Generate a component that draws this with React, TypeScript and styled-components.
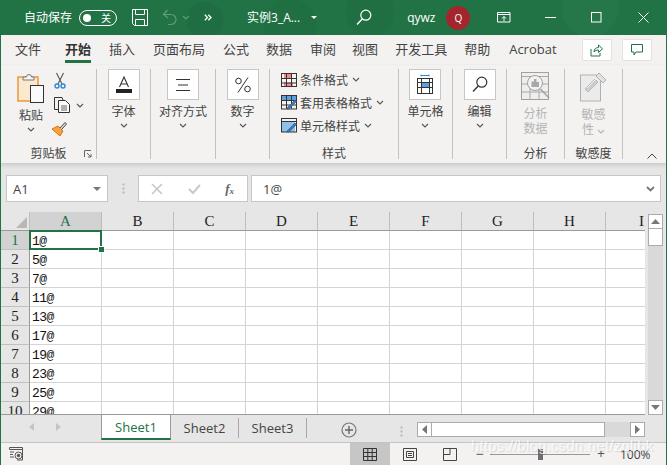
import React from 'react';
import styled, {createGlobalStyle} from 'styled-components';

const GREEN = '#217346';
const UI_FONT = '"Open Sans", "Noto Sans CJK SC", sans-serif';
const SHEET_FONT = '"Liberation Mono", "DejaVu Sans Mono", monospace';

const COLUMNS = ['A', 'B', 'C', 'D', 'E', 'F', 'G', 'H', 'I'];
const VALUES = ['1@', '5@', '7@', '11@', '13@', '17@', '19@', '23@', '25@', '29@'];
const TABS = [
  {name: '文件', gap: 24},
  {name: '开始', gap: 18, active: true},
  {name: '插入', gap: 18},
  {name: '页面布局', gap: 18},
  {name: '公式', gap: 17},
  {name: '数据', gap: 18},
  {name: '审阅', gap: 16},
  {name: '视图', gap: 17},
  {name: '开发工具', gap: 17},
  {name: '帮助', gap: 19},
  {name: 'Acrobat', gap: 0},
];

const Chevron = ({color = '#555'}: {color?: string}) => (
  <svg width='8' height='5' viewBox='0 0 8 5'>
    <polyline points='1,1 4,4 7,1' fill='none' stroke={color} strokeWidth='1.1' />
  </svg>
);

const PasteIcon = () => (
  <svg width='28' height='32' viewBox='0 0 28 32'>
    <rect x='1' y='5' width='20' height='24' fill='#fbe9cf' stroke='#e8922f' strokeWidth='1.4' />
    <path d='M6 8V5h3.5a2.5 2.5 0 0 1 5 0H17v3z' fill='#f7f6f5' stroke='#777' />
    <rect x='13.5' y='13.5' width='13' height='17' fill='#fafafa' stroke='#333' />
  </svg>
);

const CutIcon = () => (
  <svg width='12' height='17' viewBox='0 0 12 17'>
    <path d='M2.5 1L8 12M9.5 1L4 12' fill='none' stroke='#555' strokeWidth='1.1' />
    <circle cx='3' cy='14' r='2' fill='none' stroke='#2b88d8' strokeWidth='1.4' />
    <circle cx='9' cy='14' r='2' fill='none' stroke='#2b88d8' strokeWidth='1.4' />
  </svg>
);

const CopyIcon = () => (
  <svg width='17' height='16' viewBox='0 0 17 16'>
    <path d='M4.5 12.5H.5V.5H8L9 3' fill='none' stroke='#333' />
    <path d='M4.5 3.5h7l4 4v8h-11z' fill='#fafafa' stroke='#333' />
    <path d='M7 9h6M7 11h6M7 13h6' stroke='#666' />
  </svg>
);

const BrushIcon = () => (
  <svg width='17' height='16' viewBox='0 0 17 16'>
    <path d='M1 8l6-3 5 5-3 5z' fill='#f7a23b' stroke='#d9730d' />
    <path d='M9 7l5-5.5 1.5 1.5L10.5 8.5' fill='#ddd' stroke='#444' />
  </svg>
);

const LauncherIcon = () => (
  <svg width='8' height='8' viewBox='0 0 8 8'>
    <path d='M.5 7V.5H7M3 3l4 4M7 4v3H4' fill='none' stroke='#666' />
  </svg>
);

const FontIcon = () => (
  <svg width='18' height='18' viewBox='0 0 18 18'>
    <path d='M4.5 11L9 1l4.5 10M6 8h6' fill='none' stroke='#333' strokeWidth='1.1' />
    <rect x='1' y='13' width='16' height='4' fill='#222' />
  </svg>
);

const AlignIcon = () => (
  <svg width='16' height='14' viewBox='0 0 16 14'>
    <path d='M1 1.5h14M3 7h10M1 12.5h14' stroke='#333' strokeWidth='1.1' />
  </svg>
);

const PercentIcon = () => (
  <svg width='18' height='18' viewBox='0 0 18 18'>
    <circle cx='4.5' cy='5' r='2.8' fill='none' stroke='#333' />
    <circle cx='13.5' cy='13' r='2.8' fill='none' stroke='#333' />
    <path d='M14 1.5L4 16.5' stroke='#333' />
  </svg>
);

const GridLines = () => (
  <path d='M.5 5.5h15M.5 10h15M5.5.5v13M10.5.5v13' fill='none' stroke='#333' />
);

const ConditionalIcon = () => (
  <svg width='16' height='14' viewBox='0 0 16 14'>
    <rect x='5.5' y='5' width='5' height='4.5' fill='#fff' />
    <rect x='3' y='1' width='7' height='4' fill='#f28b8b' />
    <rect x='3' y='9.5' width='9' height='4' fill='#f28b8b' />
    <rect x='.5' y='.5' width='15' height='13' fill='none' stroke='#333' />
    <GridLines />
  </svg>
);

const TableStyleIcon = () => (
  <svg width='16' height='15' viewBox='0 0 16 15'>
    <rect x='1' y='1' width='14' height='4' fill='#5ba3e0' />
    <rect x='.5' y='.5' width='15' height='13.5' fill='none' stroke='#333' />
    <GridLines />
    <path d='M6 13L14 5l1.5 1.5L8 14H6z' fill='#2b7cd3' stroke='#555' strokeWidth='.7' />
  </svg>
);

const CellStyleIcon = () => (
  <svg width='16' height='15' viewBox='0 0 16 15'>
    <rect x='1' y='3' width='13' height='11' fill='#8ec1ec' />
    <rect x='.5' y='.5' width='15' height='13.5' fill='none' stroke='#333' />
    <path d='M.5 3.5h15' stroke='#333' />
    <path d='M6 13L14 5l1.5 1.5L8 14H6z' fill='#2b7cd3' stroke='#555' strokeWidth='.7' />
  </svg>
);

const CellsIcon = () => (
  <svg width='18' height='21' viewBox='0 0 18 21'>
    <path d='M5 1.5h8M5 .5v2M13 .5v2' stroke='#2b88d8' />
    <rect x='5.5' y='8.5' width='8' height='5' fill='#5ba3e0' />
    <rect x='1.5' y='4.5' width='15' height='15' fill='none' stroke='#333' />
    <path d='M1.5 8.5h15M1.5 13.5h15M5.5 4.5v15M13.5 4.5v15' fill='none' stroke='#333' />
  </svg>
);

const SearchIcon = ({color}: {color: string}) => (
  <svg width='16' height='17' viewBox='0 0 16 17'>
    <circle cx='9.8' cy='6.2' r='5' fill='none' stroke={color} strokeWidth='1.2' />
    <path d='M6.2 10L1 15.5' stroke={color} strokeWidth='1.4' />
  </svg>
);

const AnalysisIcon = () => (
  <svg width='29' height='29' viewBox='0 0 29 29'>
    <rect x='.5' y='.5' width='27' height='27' fill='#eee' stroke='#a0a0a0' />
    <path d='M.5 4.5h27M.5 12h27M.5 20h27M9 4v24M18 4v24' fill='none' stroke='#a8a8a8' />
    <circle cx='14' cy='11' r='7.5' fill='#f3f2f1' stroke='#a0a0a0' />
    <path d='M10.5 9.5h2.5V15h-2.5zM13 7h2.5v8H13zM15.5 10h2.5v5h-2.5z' fill='#a8a8a8' />
    <path d='M19.5 17l8.5 9' stroke='#a0a0a0' strokeWidth='1.4' />
  </svg>
);

const SensitivityIcon = () => (
  <svg width='28' height='30' viewBox='0 0 28 30'>
    <rect x='.5' y='3' width='20' height='26' fill='#ebebeb' stroke='#b0b0b0' />
    <path d='M5 17L15 7l3 3L8 20z' fill='#ccc' stroke='#bbb' />
    <path d='M16 4l3-3 7 7-3 3z' fill='#e2e2e2' stroke='#b0b0b0' />
    <path d='M7 16L16 7' stroke='#f3f3f3' />
  </svg>
);

const App = () => {
  return (
    <Window>
      <GlobalStyle />
      <TitleBar>
        <AutoSave>自动保存</AutoSave>
        <Toggle>
          <ToggleKnob />
          <span>关</span>
        </Toggle>
        <TitleIcon $left={15}>
          <svg width='16' height='17' viewBox='0 0 16 17'>
            <path d='M.5.5h15v16H2.5l-2-2z' fill='none' stroke='#fff' />
            <path d='M3.5.5v5h9v-5M3.5 16.5v-6h9v6' fill='none' stroke='#fff' />
          </svg>
        </TitleIcon>
        <TitleIcon $left={14}>
          <svg width='16' height='17' viewBox='0 0 16 17'>
            <path d='M5.5 1L1.5 5.5 6 9M2 5.500h7a5 5 0 0 1 0 10H6' fill='none' stroke='#5f9b7c' strokeWidth='1.2' />
          </svg>
        </TitleIcon>
        <TitleIcon $left={4}>
          <Chevron color='#5f9b7c' />
        </TitleIcon>
        <Overflow>
          <svg width='8' height='7' viewBox='0 0 8 7'>
            <path d='M.8.8L3.500 3.500.8 6.200M4.300.8L7 3.500 4.300 6.200' fill='none' stroke='#fff' strokeWidth='1.300' />
          </svg>
        </Overflow>
        <DocTitle>实例3_A...</DocTitle>
        <TitleCaret />
        <TitleIcon $left={39}>
          <SearchIcon color='#fff' />
        </TitleIcon>
        <UserName>qywz</UserName>
        <Avatar>Q</Avatar>
        <TitleIcon $left={27}>
          <svg width='14' height='11' viewBox='0 0 14 11'>
            <path d='M.5.5h12.5v9.5H.5zM.5 2.500h12.500M7 9V4.500M5 6.500l2-2 2 2' fill='none' stroke='#fff' />
          </svg>
        </TitleIcon>
        <TitleIcon $left={34}>
          <svg width='11' height='11' viewBox='0 0 11 11'>
            <path d='M0 5.500h11' stroke='#fff' />
          </svg>
        </TitleIcon>
        <TitleIcon $left={35}>
          <svg width='11' height='11' viewBox='0 0 11 11'>
            <rect x='.5' y='.5' width='9.500' height='9.500' fill='none' stroke='#fff' />
          </svg>
        </TitleIcon>
        <TitleIcon $left={36}>
          <svg width='11' height='11' viewBox='0 0 11 11'>
            <path d='M.5.5l10 10M10.500.5l-10 10' stroke='#fff' />
          </svg>
        </TitleIcon>
      </TitleBar>

      <TabRow>
        {TABS.map((tab) => (
          <RibbonTab key={tab.name} $active={tab.active} $gap={tab.gap}>{tab.name}</RibbonTab>
        ))}
        <TabActions>
          <ActionButton>
            <svg width='13' height='13' viewBox='0 0 13 13'>
              <path d='M1 5v7h9V9M4 8c0-3 2-4.500 4.500-4.500V1L12.500 4.800 8.500 8.500V6C6.500 6 5 6.800 4 8z' fill='none' stroke={GREEN} />
            </svg>
          </ActionButton>
          <ActionButton>
            <svg width='12' height='12' viewBox='0 0 12 12'>
              <path d='M.5.500h11v7.500H5L3 11V8H.5z' fill='none' stroke={GREEN} />
            </svg>
          </ActionButton>
        </TabActions>
      </TabRow>

      <Ribbon>
        <Group $width={96}>
          <GroupBody>
            <PasteColumn>
              <PasteIcon />
              <BigLabel>粘贴</BigLabel>
              <Chevron />
            </PasteColumn>
            <SmallTools>
              <CutIcon />
              <CopyRow>
                <CopyIcon />
                <Chevron />
              </CopyRow>
              <BrushIcon />
            </SmallTools>
          </GroupBody>
          <GroupLabel>剪贴板</GroupLabel>
          <Launcher><LauncherIcon /></Launcher>
        </Group>
        <CommandGroup $width={54} label='字体'><FontIcon /></CommandGroup>
        <CommandGroup $width={65} label='对齐方式'><AlignIcon /></CommandGroup>
        <CommandGroup $width={54} label='数字'><PercentIcon /></CommandGroup>
        <Group $width={129}>
          <StyleList>
            <StyleRow><ConditionalIcon /><span>条件格式</span><Chevron /></StyleRow>
            <StyleRow><TableStyleIcon /><span>套用表格格式</span><Chevron /></StyleRow>
            <StyleRow><CellStyleIcon /><span>单元格样式</span><Chevron /></StyleRow>
          </StyleList>
          <GroupLabel>样式</GroupLabel>
        </Group>
        <CommandGroup $width={54} label='单元格'><CellsIcon /></CommandGroup>
        <CommandGroup $width={54} label='编辑'><SearchIcon color='#333' /></CommandGroup>
        <Group $width={58}>
          <DisabledColumn>
            <AnalysisIcon />
            <DisabledLabel>分析<br />数据</DisabledLabel>
          </DisabledColumn>
          <GroupLabel>分析</GroupLabel>
        </Group>
        <Group $width={58}>
          <DisabledColumn>
            <SensitivityIcon />
            <DisabledLabel>敏感<br />性 <Chevron color='#b4b4b4' /></DisabledLabel>
          </DisabledColumn>
          <GroupLabel>敏感度</GroupLabel>
        </Group>
        <Collapse>
          <svg width='10' height='6' viewBox='0 0 10 6'>
            <polyline points='.5,5.500 5,1 9.500,5.500' fill='none' stroke='#444' />
          </svg>
        </Collapse>
      </Ribbon>

      <FormulaBar>
        <NameBox>
          <span>A1</span>
          <DropTriangle />
        </NameBox>
        <Grip />
        <FormulaTools>
          <svg width='12' height='12' viewBox='0 0 12 12'>
            <path d='M1 1l10 10M11 1L1 11' stroke='#c8c8c8' strokeWidth='1.6' />
          </svg>
          <svg width='13' height='12' viewBox='0 0 13 12'>
            <path d='M1 6l4 4 7-8' fill='none' stroke='#c8c8c8' strokeWidth='2' />
          </svg>
          <FxLabel>f<sub>x</sub></FxLabel>
        </FormulaTools>
        <FormulaInput>
          <span>1@</span>
          <svg width='9' height='6' viewBox='0 0 9 6'>
            <polyline points='1,1 4.500,4.500 8,1' fill='none' stroke='#777' strokeWidth='1.8' />
          </svg>
        </FormulaInput>
      </FormulaBar>

      <SheetArea>
        <SheetGrid>
          <Corner><CornerMark /></Corner>
          {COLUMNS.map((col, id) => (
            <ColumnHeader key={col} $selected={id === 0}>{col}</ColumnHeader>
          ))}
          {VALUES.map((value, row) => (
            <React.Fragment key={value}>
              <RowHeader $selected={row === 0}>{row + 1}</RowHeader>
              {COLUMNS.map((col, id) => (
                <Cell key={col}>
                  {id === 0 ? value : ''}
                  {row === 0 && id === 0 && <Selection><Handle /></Selection>}
                </Cell>
              ))}
            </React.Fragment>
          ))}
        </SheetGrid>
        <VerticalScroll>
          <ScrollButton>
            <svg width='9' height='5' viewBox='0 0 9 5'><path d='M4.500 0L9 5H0z' fill='#777' /></svg>
          </ScrollButton>
          <VerticalThumb />
          <ScrollTrack />
          <ScrollButton>
            <svg width='9' height='5' viewBox='0 0 9 5'><path d='M4.500 5L9 0H0z' fill='#777' /></svg>
          </ScrollButton>
        </VerticalScroll>
      </SheetArea>

      <SheetTabs>
        <TabNav>
          <svg width='5' height='8' viewBox='0 0 5 8'><path d='M5 0v8L0 4z' fill='#c4c4c4' /></svg>
          <svg width='5' height='8' viewBox='0 0 5 8'><path d='M0 0v8l5-4z' fill='#c4c4c4' /></svg>
        </TabNav>
        <SheetTab $active>Sheet1</SheetTab>
        <SheetTab>Sheet2</SheetTab>
        <SheetTab>Sheet3</SheetTab>
        <AddSheet>
          <svg width='16' height='16' viewBox='0 0 16 16'>
            <circle cx='8' cy='8' r='7' fill='none' stroke='#777' strokeWidth='1.2' />
            <path d='M8 4v8M4 8h8' stroke='#666' strokeWidth='1.4' />
          </svg>
        </AddSheet>
        <TabGrip />
        <HorizontalScroll>
          <HorizontalButton>
            <svg width='5' height='9' viewBox='0 0 5 9'><path d='M5 0v9L0 4.500z' fill='#777' /></svg>
          </HorizontalButton>
          <HorizontalThumb />
          <HorizontalButton>
            <svg width='5' height='9' viewBox='0 0 5 9'><path d='M0 0v9l5-4.500z' fill='#777' /></svg>
          </HorizontalButton>
        </HorizontalScroll>
      </SheetTabs>

      <StatusBar>
        <MacroIcon>
          <svg width='14' height='14' viewBox='0 0 14 14'>
            <path d='M.5 2.500V.5h13V13H8M.5 2.500h13M1 5h4M1 7.500h3M1 10h4' fill='none' stroke='#555' />
            <circle cx='9.500' cy='8.500' r='3.500' fill='none' stroke='#555' />
            <circle cx='9.500' cy='8.500' r='1.700' fill='#555' />
          </svg>
        </MacroIcon>
        <ViewButton $active>
          <svg width='14' height='13' viewBox='0 0 14 13'>
            <path d='M.5.500h13v12H.5zM.5 4.500h13M.5 8.500h13M4.800.5v12M9.200.5v12' fill='none' stroke='#333' />
          </svg>
        </ViewButton>
        <ViewButton>
          <svg width='14' height='13' viewBox='0 0 14 13'>
            <path d='M.5.500h13v12H.5zM3.500 3.500h7v6h-7zM5 5.500h4M5 7.500h4' fill='none' stroke='#444' />
          </svg>
        </ViewButton>
        <ViewButton>
          <svg width='14' height='13' viewBox='0 0 14 13'>
            <path d='M.5.500h13v12H.5zM.5 6.500h6.500M7 .5v6' fill='none' stroke='#444' />
          </svg>
        </ViewButton>
        <ZoomSign>−</ZoomSign>
        <ZoomSlider><ZoomThumb /></ZoomSlider>
        <ZoomSign>+</ZoomSign>
        <ZoomValue>100%</ZoomValue>
      </StatusBar>
      <Watermark>https://blog.csdn.net/zqlibk</Watermark>
    </Window>
  );
};

const CommandGroup = ({$width, label, children}: {$width: number; label: string; children: React.ReactNode}) => (
  <Group $width={$width}>
    <CommandColumn>
      <CommandBox>{children}</CommandBox>
      <BigLabel>{label}</BigLabel>
      <Chevron />
    </CommandColumn>
  </Group>
);

const GlobalStyle = createGlobalStyle`
  html, body {
    margin: 0;
    padding: 0;
    background: #fff;
  }
`;

const Window = styled.div`
  position: relative;
  width: 667px;
  height: 465px;
  box-sizing: border-box;
  overflow: hidden;
  display: flex;
  flex-direction: column;
  border-left: 1px solid ${GREEN};
  border-right: 1px solid ${GREEN};
  background: #e6e6e6;
  font-family: ${UI_FONT};
  color: #444;
`;

const TitleBar = styled.div`
  height: 35px;
  margin: 0 -1px;
  flex: none;
  display: flex;
  align-items: center;
  padding-left: 24px;
  color: #fff;
  background:
    radial-gradient(circle at 205px 20px, #1f6e43 0 18px, transparent 19px),
    radial-gradient(circle at 290px 25px, #1f6f43 0 26px, transparent 27px),
    radial-gradient(circle at 370px 12px, #1f6f43 0 24px, transparent 25px),
    radial-gradient(circle at 590px 8px, #25774a 0 28px, transparent 29px),
    ${GREEN};
`;

const AutoSave = styled.span`
  font-size: 12px;
  line-height: 16px;
`;

const Toggle = styled.div`
  margin-left: 7px;
  width: 38px;
  height: 16px;
  box-sizing: border-box;
  border: 1px solid #fff;
  border-radius: 8px;
  display: flex;
  align-items: center;
  justify-content: space-between;
  padding: 0 5px 0 3px;
  font-size: 10px;
`;

const ToggleKnob = styled.span`
  width: 8px;
  height: 8px;
  border-radius: 50%;
  background: #fff;
`;

const TitleIcon = styled.span<{$left: number}>`
  display: flex;
  margin-left: ${(props) => props.$left}px;
`;

const Overflow = styled.span`
  margin-left: 14px;
  width: 10px;
  display: flex;
`;

const DocTitle = styled.span`
  margin-left: 33px;
  font-size: 12px;
  line-height: 16px;
`;

const TitleCaret = styled.span`
  margin-left: 11px;
  border-left: 3px solid transparent;
  border-right: 3px solid transparent;
  border-top: 3px solid #fff;
`;

const UserName = styled.span`
  margin-left: 35px;
  font-size: 12px;
  line-height: 16px;
`;

const Avatar = styled.span`
  margin-left: 11px;
  width: 24px;
  height: 24px;
  border-radius: 50%;
  background: #a4262c;
  display: flex;
  align-items: center;
  justify-content: center;
  font-size: 10px;
`;

const TabRow = styled.div`
  height: 30px;
  flex: none;
  box-sizing: border-box;
  padding: 5px 0 0 14px;
  display: flex;
  align-items: flex-start;
  background: #f3f2f1;
`;

const RibbonTab = styled.span<{$active?: boolean; $gap: number}>`
  position: relative;
  margin-right: ${(props) => props.$gap}px;
  font-size: 13px;
  line-height: 18px;
  font-weight: ${(props) => (props.$active ? 700 : 400)};
  color: ${(props) => (props.$active ? '#333' : '#444')};
  ${(props) => props.$active && `
    &::after {
      content: '';
      position: absolute;
      left: 0;
      right: 0;
      top: 20px;
      height: 3px;
      background: ${GREEN};
    }
  `}
`;

const TabActions = styled.div`
  margin: -1px 0 0 25px;
  display: flex;
  gap: 10px;
`;

const ActionButton = styled.div`
  width: 30px;
  height: 22px;
  box-sizing: border-box;
  background: #fff;
  border: 1px solid #e3e2e1;
  border-radius: 2px;
  display: flex;
  align-items: center;
  justify-content: center;
`;

const Ribbon = styled.div`
  position: relative;
  height: 98px;
  flex: none;
  box-sizing: border-box;
  padding: 4px 0;
  display: flex;
  background: #f3f2f1;
  box-shadow: 0 2px 4px rgba(0, 0, 0, 0.14);
  z-index: 1;
`;

const Group = styled.div<{$width: number}>`
  position: relative;
  width: ${(props) => props.$width}px;
  flex: none;
  box-sizing: border-box;
  display: flex;
  flex-direction: column;
  align-items: center;
  border-right: 1px solid #c2c2c2;
`;

const GroupBody = styled.div`
  flex: 1;
  display: flex;
  gap: 6px;
  padding-top: 3px;
  margin-right: 1px;
`;

const PasteColumn = styled.div`
  display: flex;
  flex-direction: column;
  align-items: center;
  width: 28px;
`;

const SmallTools = styled.div`
  width: 28px;
  display: flex;
  flex-direction: column;
  gap: 8px;
  align-items: flex-start;
  svg:first-child {
    margin-left: 3px;
  }
`;

const CopyRow = styled.div`
  display: flex;
  gap: 5px;
  align-items: center;
`;

const GroupLabel = styled.div`
  font-size: 12px;
  line-height: 14px;
  margin-bottom: -2px;
  color: #444;
`;

const Launcher = styled.span`
  position: absolute;
  right: 4px;
  bottom: 1px;
  display: flex;
`;

const CommandColumn = styled.div`
  display: flex;
  flex-direction: column;
  align-items: center;
`;

const CommandBox = styled.div`
  width: 32px;
  height: 31px;
  box-sizing: border-box;
  border: 1px solid #c6c6c6;
  background: #fff;
  display: flex;
  align-items: center;
  justify-content: center;
`;

const BigLabel = styled.div`
  font-size: 12px;
  line-height: 16px;
  margin: 4px 0 3px;
  white-space: nowrap;
  color: #444;
`;

const StyleList = styled.div`
  flex: 1;
  align-self: flex-start;
  padding: 0 0 0 11px;
  margin-top: -1px;
  display: flex;
  flex-direction: column;
`;

const StyleRow = styled.div`
  height: 23px;
  display: flex;
  align-items: center;
  gap: 3px;
  font-size: 12px;
  white-space: nowrap;
  color: #444;
  svg:last-child {
    margin-left: 1px;
  }
`;

const DisabledColumn = styled.div`
  flex: 1;
  display: flex;
  flex-direction: column;
  align-items: center;
  padding-top: 3px;
`;

const DisabledLabel = styled.div`
  margin-top: 5px;
  font-size: 12px;
  line-height: 15px;
  text-align: center;
  color: #b4b4b4;
`;

const Collapse = styled.span`
  margin: 84px 0 0 24px;
  display: flex;
  align-self: flex-start;
`;

const FormulaBar = styled.div`
  height: 49px;
  flex: none;
  box-sizing: border-box;
  padding: 12px 5px 10px 5px;
  display: flex;
  align-items: stretch;
  background: #e6e6e6;
`;

const NameBox = styled.div`
  width: 102px;
  box-sizing: border-box;
  background: #fff;
  border: 1px solid #c6c6c6;
  padding: 0 6px 0 6px;
  display: flex;
  align-items: center;
  justify-content: space-between;
  font-size: 13px;
  color: #444;
`;

const DropTriangle = styled.span`
  border-left: 4px solid transparent;
  border-right: 4px solid transparent;
  border-top: 4px solid #777;
`;

const Grip = styled.span`
  width: 30px;
  background: radial-gradient(circle, #b4b4b4 1px, transparent 1.2px) center / 2px 4px repeat-y;
  background-size: 3px 4px;
  margin: 7px 0;
`;

const FormulaTools = styled.div`
  width: 110px;
  box-sizing: border-box;
  background: #fff;
  border: 1px solid #c6c6c6;
  padding: 0 13px 0 12px;
  display: flex;
  align-items: center;
  justify-content: space-between;
`;

const FxLabel = styled.span`
  font-family: "Liberation Serif", serif;
  font-style: italic;
  font-weight: 700;
  font-size: 13px;
  color: #666;
  sub {
    font-size: 9px;
    vertical-align: -1px;
  }
`;

const FormulaInput = styled.div`
  flex: 1;
  margin-left: 3px;
  box-sizing: border-box;
  background: #fff;
  border: 1px solid #c6c6c6;
  padding: 0 5px 0 11px;
  display: flex;
  align-items: center;
  justify-content: space-between;
  font-size: 13px;
  color: #444;
`;

const SheetArea = styled.div`
  height: 203px;
  flex: none;
  display: flex;
  background: #e6e6e6;
`;

const SheetGrid = styled.div`
  width: 644px;
  height: 203px;
  overflow: hidden;
  display: grid;
  grid-template-columns: 29px repeat(9, 72px);
  grid-auto-rows: 19px;
  align-content: start;
  box-sizing: border-box;
  border-bottom: 1px solid #9a9a9a;
  font-family: ${SHEET_FONT};
  font-size: 13px;
  color: #111;
`;

const Corner = styled.div`
  background: #e6e6e6;
  border-bottom: 1px solid #9a9a9a;
  border-right: 1px solid #c0c0c0;
  position: relative;
`;

const CornerMark = styled.span`
  position: absolute;
  right: 2px;
  bottom: 2px;
  border-left: 11px solid transparent;
  border-bottom: 11px solid #b8b8b8;
`;

const ColumnHeader = styled.div<{$selected?: boolean}>`
  box-sizing: border-box;
  display: flex;
  align-items: center;
  justify-content: center;
  padding-top: 1px;
  font-family: "Liberation Serif", serif;
  font-size: 15px;
  background: ${(props) => (props.$selected ? '#d2d2d2' : '#e6e6e6')};
  color: ${(props) => (props.$selected ? GREEN : '#222')};
  border-bottom: 1px solid ${(props) => (props.$selected ? GREEN : '#9a9a9a')};
  border-right: 1px solid #bdbdbd;
`;

const RowHeader = styled.div<{$selected?: boolean}>`
  box-sizing: border-box;
  display: flex;
  align-items: center;
  justify-content: center;
  font-family: "Liberation Serif", serif;
  font-size: 15px;
  background: ${(props) => (props.$selected ? '#d2d2d2' : '#e6e6e6')};
  color: ${(props) => (props.$selected ? GREEN : '#222')};
  border-bottom: 1px solid #c0c0c0;
  border-right: 1px solid ${(props) => (props.$selected ? GREEN : '#9a9a9a')};
`;

const Cell = styled.div`
  position: relative;
  box-sizing: border-box;
  background: #fff;
  border-bottom: 1px solid #d4d4d4;
  border-right: 1px solid #d4d4d4;
  padding: 3px 0 0 2px;
  line-height: 16px;
  letter-spacing: -0.5px;
`;

const Selection = styled.span`
  position: absolute;
  left: -1px;
  top: -1px;
  width: 73px;
  height: 20px;
  box-sizing: border-box;
  border: 2px solid ${GREEN};
  z-index: 2;
`;

const Handle = styled.span`
  position: absolute;
  right: -5px;
  bottom: -5px;
  width: 5px;
  height: 5px;
  background: ${GREEN};
  border: 1px solid #fff;
`;

const VerticalScroll = styled.div`
  width: 15px;
  margin: 2px 0 0 3px;
  display: flex;
  flex-direction: column;
`;

const ScrollButton = styled.div`
  height: 15px;
  flex: none;
  box-sizing: border-box;
  background: #fff;
  border: 1px solid #ababab;
  display: flex;
  align-items: center;
  justify-content: center;
`;

const VerticalThumb = styled.div`
  height: 17px;
  flex: none;
  box-sizing: border-box;
  background: #fff;
  border: 1px solid #ababab;
  border-top: 0;
`;

const ScrollTrack = styled.div`
  flex: 1;
  background: #d9d9d9;
`;

const SheetTabs = styled.div`
  height: 28px;
  flex: none;
  box-sizing: border-box;
  display: flex;
  align-items: flex-start;
  border-bottom: 1px solid #c4c4c4;
  background: #e6e6e6;
`;

const TabNav = styled.div`
  width: 100px;
  box-sizing: border-box;
  height: 23px;
  padding: 0 40px 0 28px;
  display: flex;
  align-items: center;
  justify-content: space-between;
`;

const SheetTab = styled.div<{$active?: boolean}>`
  width: ${(props) => (props.$active ? 70 : 68)}px;
  height: ${(props) => (props.$active ? 25 : 20)}px;
  box-sizing: border-box;
  margin-top: ${(props) => (props.$active ? 0 : 3)}px;
  display: flex;
  align-items: center;
  justify-content: center;
  font-size: 13px;
  color: ${(props) => (props.$active ? GREEN : '#444')};
  background: ${(props) => (props.$active ? '#fff' : 'transparent')};
  border-bottom: ${(props) => (props.$active ? `2px solid ${GREEN}` : '0')};
  border-left: ${(props) => (props.$active ? '1px solid #9a9a9a' : '0')};
  border-right: 1px solid ${(props) => (props.$active ? '#9a9a9a' : '#a8a8a8')};
`;

const AddSheet = styled.span`
  margin: 7px 0 0 34px;
  display: flex;
`;

const TabGrip = styled.span`
  width: 3px;
  height: 11px;
  margin: 11px 0 0 43px;
  background: radial-gradient(circle, #b4b4b4 1px, transparent 1.2px) center / 3px 4px repeat-y;
`;

const HorizontalScroll = styled.div`
  margin: 7px 0 0 14px;
  width: 228px;
  height: 15px;
  box-sizing: border-box;
  display: flex;
  background: #d9d9d9;
`;

const HorizontalButton = styled.div`
  width: 15px;
  box-sizing: border-box;
  background: #fff;
  border: 1px solid #ababab;
  display: flex;
  align-items: center;
  justify-content: center;
  &:last-child {
    margin-left: auto;
  }
`;

const HorizontalThumb = styled.div`
  width: 173px;
  box-sizing: border-box;
  background: #fff;
  border: 1px solid #ababab;
  border-left: 0;
`;

const StatusBar = styled.div`
  flex: 1;
  display: flex;
  align-items: center;
  background: #f3f2f1;
  padding-left: 8px;
`;

const MacroIcon = styled.span`
  display: flex;
  margin-right: 327px;
`;

const ViewButton = styled.span<{$active?: boolean}>`
  width: 40px;
  height: 22px;
  display: flex;
  align-items: center;
  justify-content: center;
  background: ${(props) => (props.$active ? '#c6c6c6' : 'transparent')};
`;

const ZoomSign = styled.span`
  width: 14px;
  text-align: center;
  font-size: 14px;
  line-height: 16px;
  color: #555;
  margin-left: 3px;
`;

const ZoomSlider = styled.div`
  position: relative;
  width: 100px;
  height: 1px;
  margin: 0 1px 0 3px;
  background: #9a9a9a;
`;

const ZoomThumb = styled.span`
  position: absolute;
  left: 48px;
  top: -5px;
  width: 5px;
  height: 11px;
  background: #6e6e6e;
`;

const ZoomValue = styled.span`
  margin-left: 12px;
  font-size: 12px;
  color: #444;
`;

const Watermark = styled.div`
  position: absolute;
  left: 470px;
  top: 437px;
  font-family: "Liberation Sans", sans-serif;
  font-size: 15px;
  letter-spacing: 0.2px;
  white-space: nowrap;
  color: rgba(255, 255, 255, 0.75);
  text-shadow: 1px 1px 1px rgba(0, 0, 0, 0.12);
  z-index: 2;
`;

export default App;
